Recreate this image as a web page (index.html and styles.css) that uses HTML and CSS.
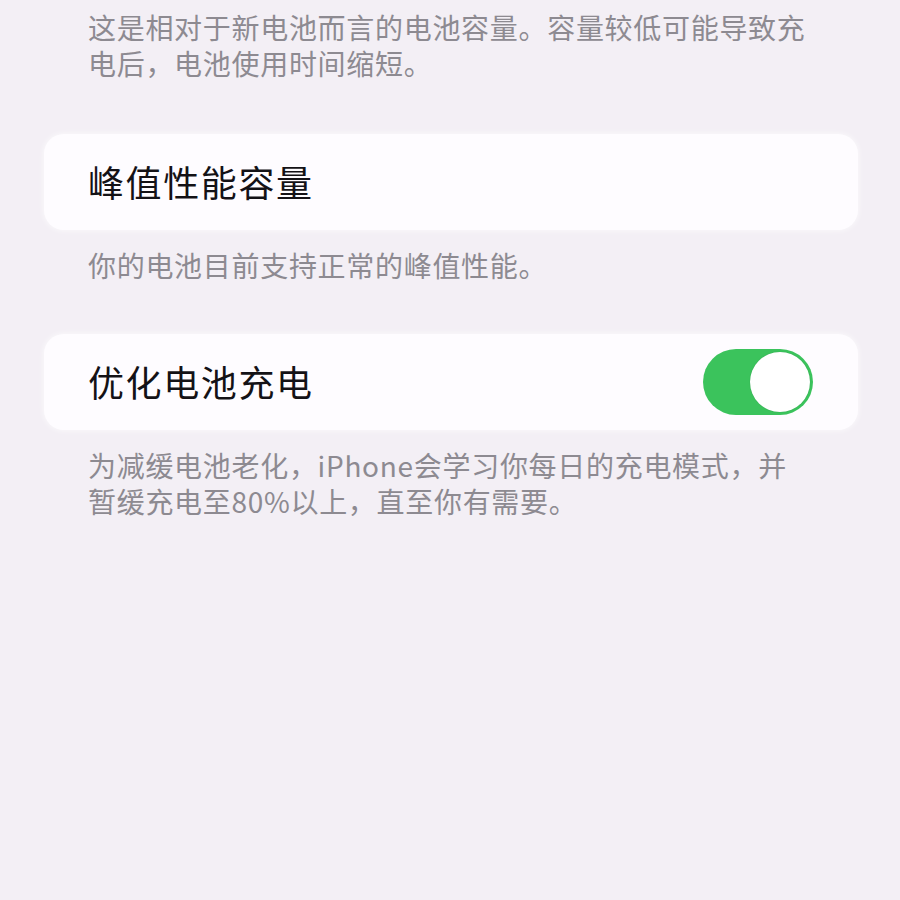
FILE: index.html
```html
<!DOCTYPE html>
<html lang="zh-CN">
<head>
<meta charset="utf-8">
<title>电池健康</title>
<link rel="stylesheet" href="styles.css">
</head>
<body>

<p class="note note-first">这是相对于新电池而言的电池容量。容量较低可能导致充<br>电后，电池使用时间缩短。</p>

<div class="card">
	<span class="label">峰值性能容量</span>
</div>
<p class="note">你的电池目前支持正常的峰值性能。</p>

<div class="card">
	<span class="label">优化电池充电</span>
	<span class="toggle is-on"><span class="knob"></span></span>
</div>
<p class="note">为减缓电池老化，iPhone会学习你每日的充电模式，并<br>暂缓充电至80%以上，直至你有需要。</p>

</body>
</html>
```

FILE: styles.css
```css
html, body {
	margin: 0;
	background: #f3eff5;
}

body {
	padding: 9px 42px 0 44px;
	font-family: "Noto Sans CJK SC", "Noto Sans", sans-serif;
}

.note {
	margin: 17px 0 51px 44px;
	font-size: 28px;
	line-height: 36px;
	letter-spacing: 0.7px;
	color: #8d8a91;
}

.note-first {
	margin-top: 0;
	margin-bottom: 53px;
}

.card {
	display: flex;
	align-items: center;
	justify-content: space-between;
	height: 96px;
	padding: 0 44px 0 44px;
	background: #fefcff;
	border-radius: 20px;
	box-shadow: 0 0 6px rgba(255, 255, 255, 0.8);
}

	.label {
		font-size: 36px;
		letter-spacing: 1.6px;
		color: #141216;
		margin-top: -2px;
	}

	.toggle {
		display: flex;
		align-items: center;
		width: 110px;
		height: 66px;
		margin-right: 1px;
		border-radius: 33px;
		background: #3bc35c;
		box-sizing: border-box;
		padding: 3px;
	}

		.toggle.is-on {
			justify-content: flex-end;
		}

		.knob {
			width: 60px;
			height: 60px;
			border-radius: 50%;
			background: #fff;
			box-shadow: 0 0 1px rgba(0, 60, 20, 0.3);
		}
```
